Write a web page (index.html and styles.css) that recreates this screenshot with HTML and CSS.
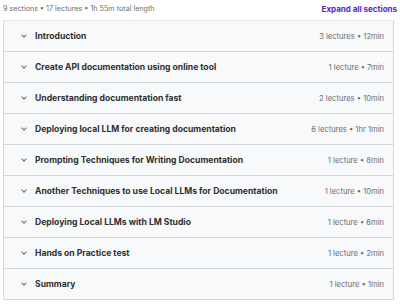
FILE: index.html
```
<!DOCTYPE html>
<html lang="en">
  <head>
    <meta charset="utf-8">
    <title>Course content</title>
    <link rel="stylesheet" href="styles.css">
  </head>
  <body>
    <div class="summary">
      <span class="stats">9 sections • 17 lectures • 1h 55m total length</span>
      <span class="expand">Expand all sections</span>
    </div>
    <div class="sections">
      <div class="row"><span class="chev"></span><span class="title">Introduction</span><span class="meta">3 lectures • 12min</span></div>
      <div class="row"><span class="chev"></span><span class="title">Create API documentation using online tool</span><span class="meta">1 lecture • 7min</span></div>
      <div class="row"><span class="chev"></span><span class="title">Understanding documentation fast</span><span class="meta">2 lectures • 10min</span></div>
      <div class="row"><span class="chev"></span><span class="title">Deploying local LLM for creating documentation</span><span class="meta">6 lectures • 1hr 1min</span></div>
      <div class="row"><span class="chev"></span><span class="title">Prompting Techniques for Writing Documentation</span><span class="meta">1 lecture • 8min</span></div>
      <div class="row"><span class="chev"></span><span class="title">Another Techniques to use Local LLMs for Documentation</span><span class="meta">1 lecture • 10min</span></div>
      <div class="row"><span class="chev"></span><span class="title">Deploying Local LLMs with LM Studio</span><span class="meta">1 lecture • 6min</span></div>
      <div class="row"><span class="chev"></span><span class="title">Hands on Practice test</span><span class="meta">1 lecture • 2min</span></div>
      <div class="row"><span class="chev"></span><span class="title">Summary</span><span class="meta">1 lecture • 1min</span></div>
    </div>
  </body>
</html>
```
FILE: styles.css
```
body{
  margin: 0;
  padding: 0 6px 0 3px;
  background: #fff;
  font-family: Inter, "Liberation Sans", sans-serif;
  color: #2d2f31;
}
.summary{
  display: flex;
  justify-content: space-between;
  align-items: center;
  height: 17px;
  padding-bottom: 3px;
}
.stats{
  font-size: 7.2px;
  color: #6a6f73;
}
.expand{
  font-size: 8px;
  font-weight: 700;
  color: #5624d0;
  margin-right: -3px;
}
.sections{
  border: 1px solid #d1d7dc;
  border-top-color: #e4e8eb;
}
.row{
  display: flex;
  align-items: center;
  height: 30px;
  padding: 0 9px 0 17px;
  background: #f7f9fa;
  border-bottom: 1px solid #d1d7dc;
}
.row:last-child{
  border-bottom: none;
}
.chev{
  width: 3px;
  height: 3px;
  border-right: 1px solid #6a6f73;
  border-bottom: 1px solid #6a6f73;
  transform: rotate(45deg);
  margin: 0 9px 2px 1px;
}
.title{
  flex: 1;
  font-size: 8.6px;
  font-weight: 700;
}
.meta{
  font-size: 7.6px;
  color: #6a6f73;
}
```
